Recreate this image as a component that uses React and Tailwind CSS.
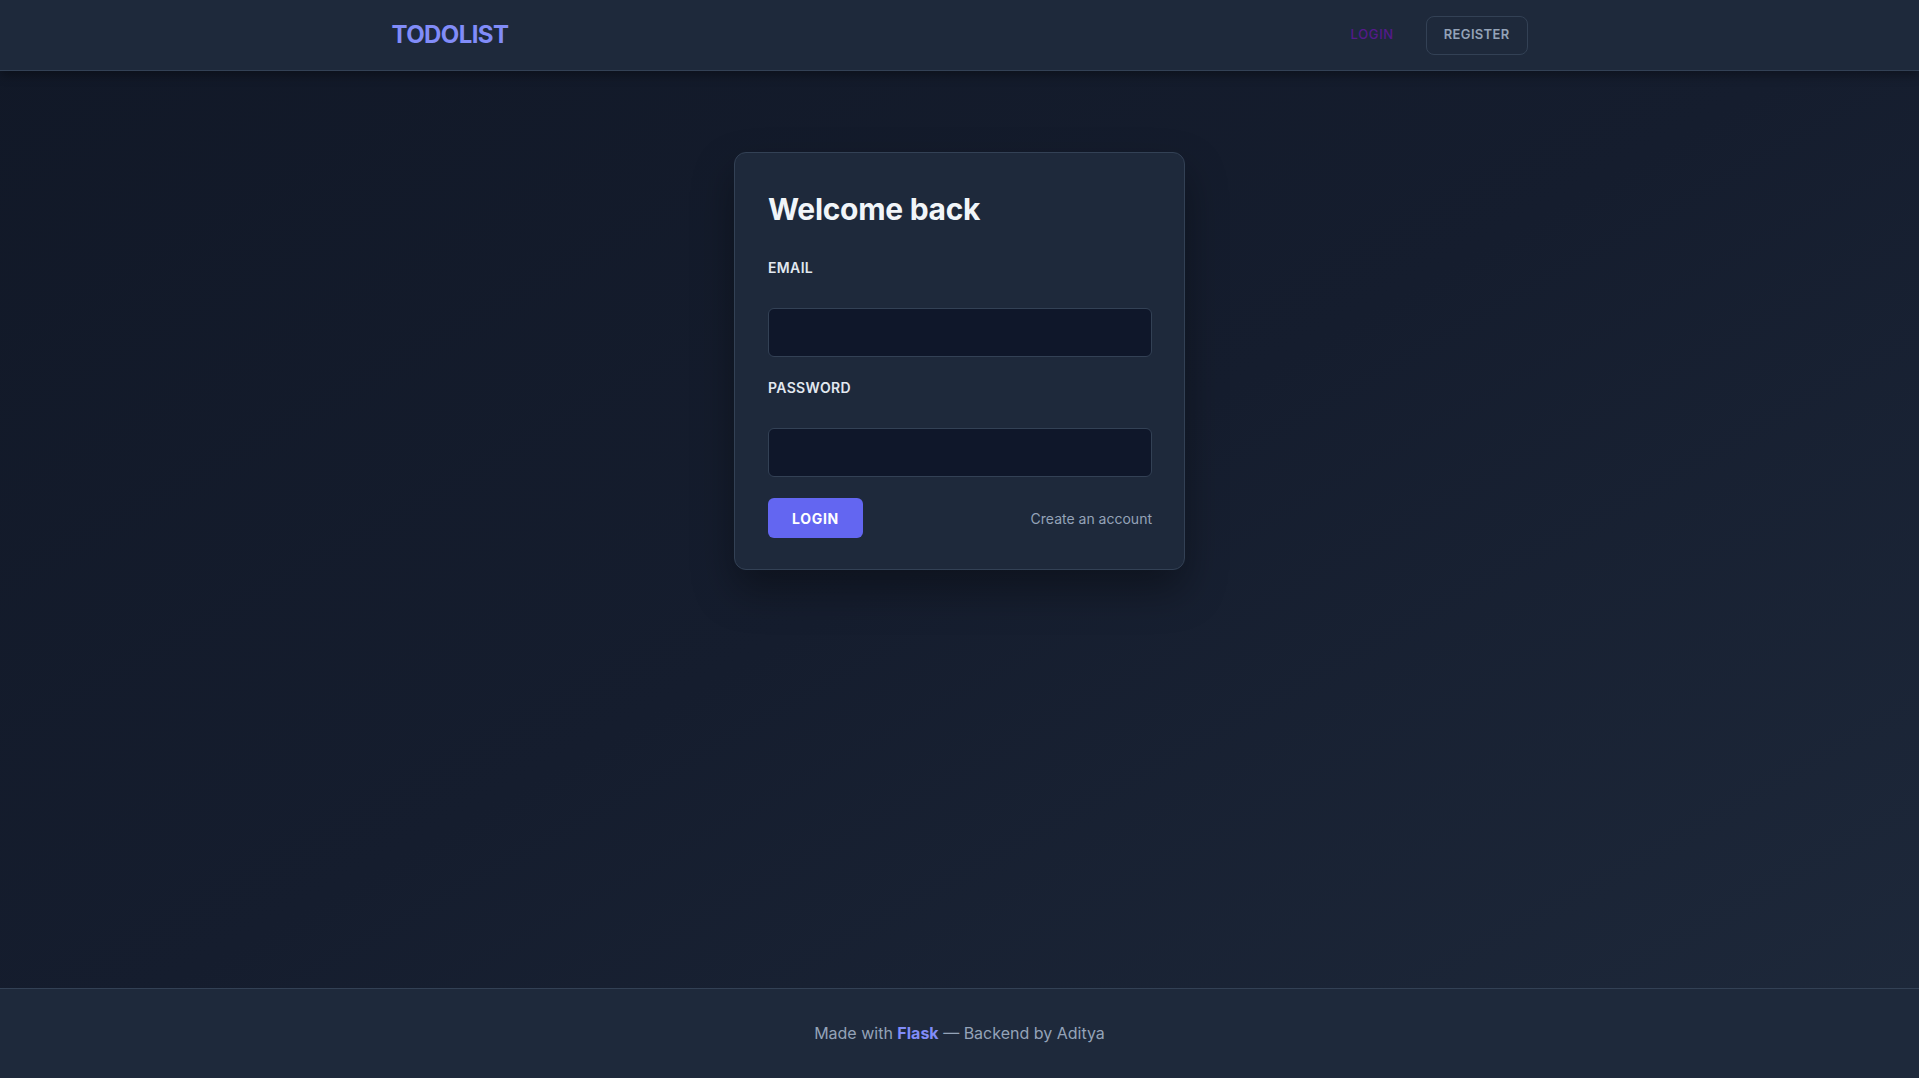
export default function App() {
  const font = { fontFamily: 'Inter, "Liberation Sans", sans-serif' };
  return (
    <div style={font} className="min-h-screen flex flex-col bg-gradient-to-br from-[#111827] via-[#151d2e] to-[#1e293b] text-slate-100">
      <header className="h-[71px] shrink-0 bg-[#1e293b] border-b border-[#334155] shadow-[0_4px_10px_rgba(0,0,0,0.35)] relative z-10">
        <div className="mx-auto max-w-6xl px-2 h-full flex items-center justify-between">
          <div className="text-[24px] font-bold text-[#818cf8] tracking-tight leading-none">TODOLIST</div>
          <nav className="flex items-center gap-8">
            <a className="text-[13px] font-medium tracking-wider text-[#551a8b]">LOGIN</a>
            <a className="h-[39px] px-[17px] flex items-center rounded-lg border-[1.5px] border-[#334155] text-[13px] font-semibold tracking-wide text-[#94a3b8]">REGISTER</a>
          </nav>
        </div>
      </header>

      <main className="flex-1 flex justify-center pt-[81px]">
        <div className="w-[451px] h-fit bg-[#1e293b] border border-[#334155] rounded-xl shadow-[0_20px_40px_rgba(0,0,0,0.35)] pl-[33px] pr-[32px] pt-[33px] pb-[31px]">
          <h2 className="text-[30px] leading-[47px] font-bold text-[#f1f5f9] tracking-[-0.01em]">Welcome back</h2>
          <label className="block mt-[25px] text-[14px] leading-5 font-semibold tracking-wide text-[#e2e8f0]">EMAIL</label>
          <div className="mt-[30px] h-[49px] rounded-md border-[1.5px] border-[#334155] bg-[#0f172a]"></div>
          <label className="block mt-[21px] text-[14px] leading-5 font-semibold tracking-wide text-[#e2e8f0]">PASSWORD</label>
          <div className="mt-[30px] h-[49px] rounded-md border-[1.5px] border-[#334155] bg-[#0f172a]"></div>
          <div className="mt-[21px] flex items-center justify-between">
            <button className="h-10 px-6 rounded-md bg-[#6366f1] text-white text-[14px] font-bold tracking-wider">LOGIN</button>
            <a className="text-[14px] text-[#94a3b8]">Create an account</a>
          </div>
        </div>
      </main>

      <footer className="h-[90px] shrink-0 bg-[#1e293b] border-t border-[#334155] flex items-center justify-center pb-[2px]">
        <p className="text-[16px] text-[#94a3b8]">
          Made with <span className="font-bold text-[#818cf8]">Flask</span> — Backend by Aditya
        </p>
      </footer>
    </div>
  );
}
